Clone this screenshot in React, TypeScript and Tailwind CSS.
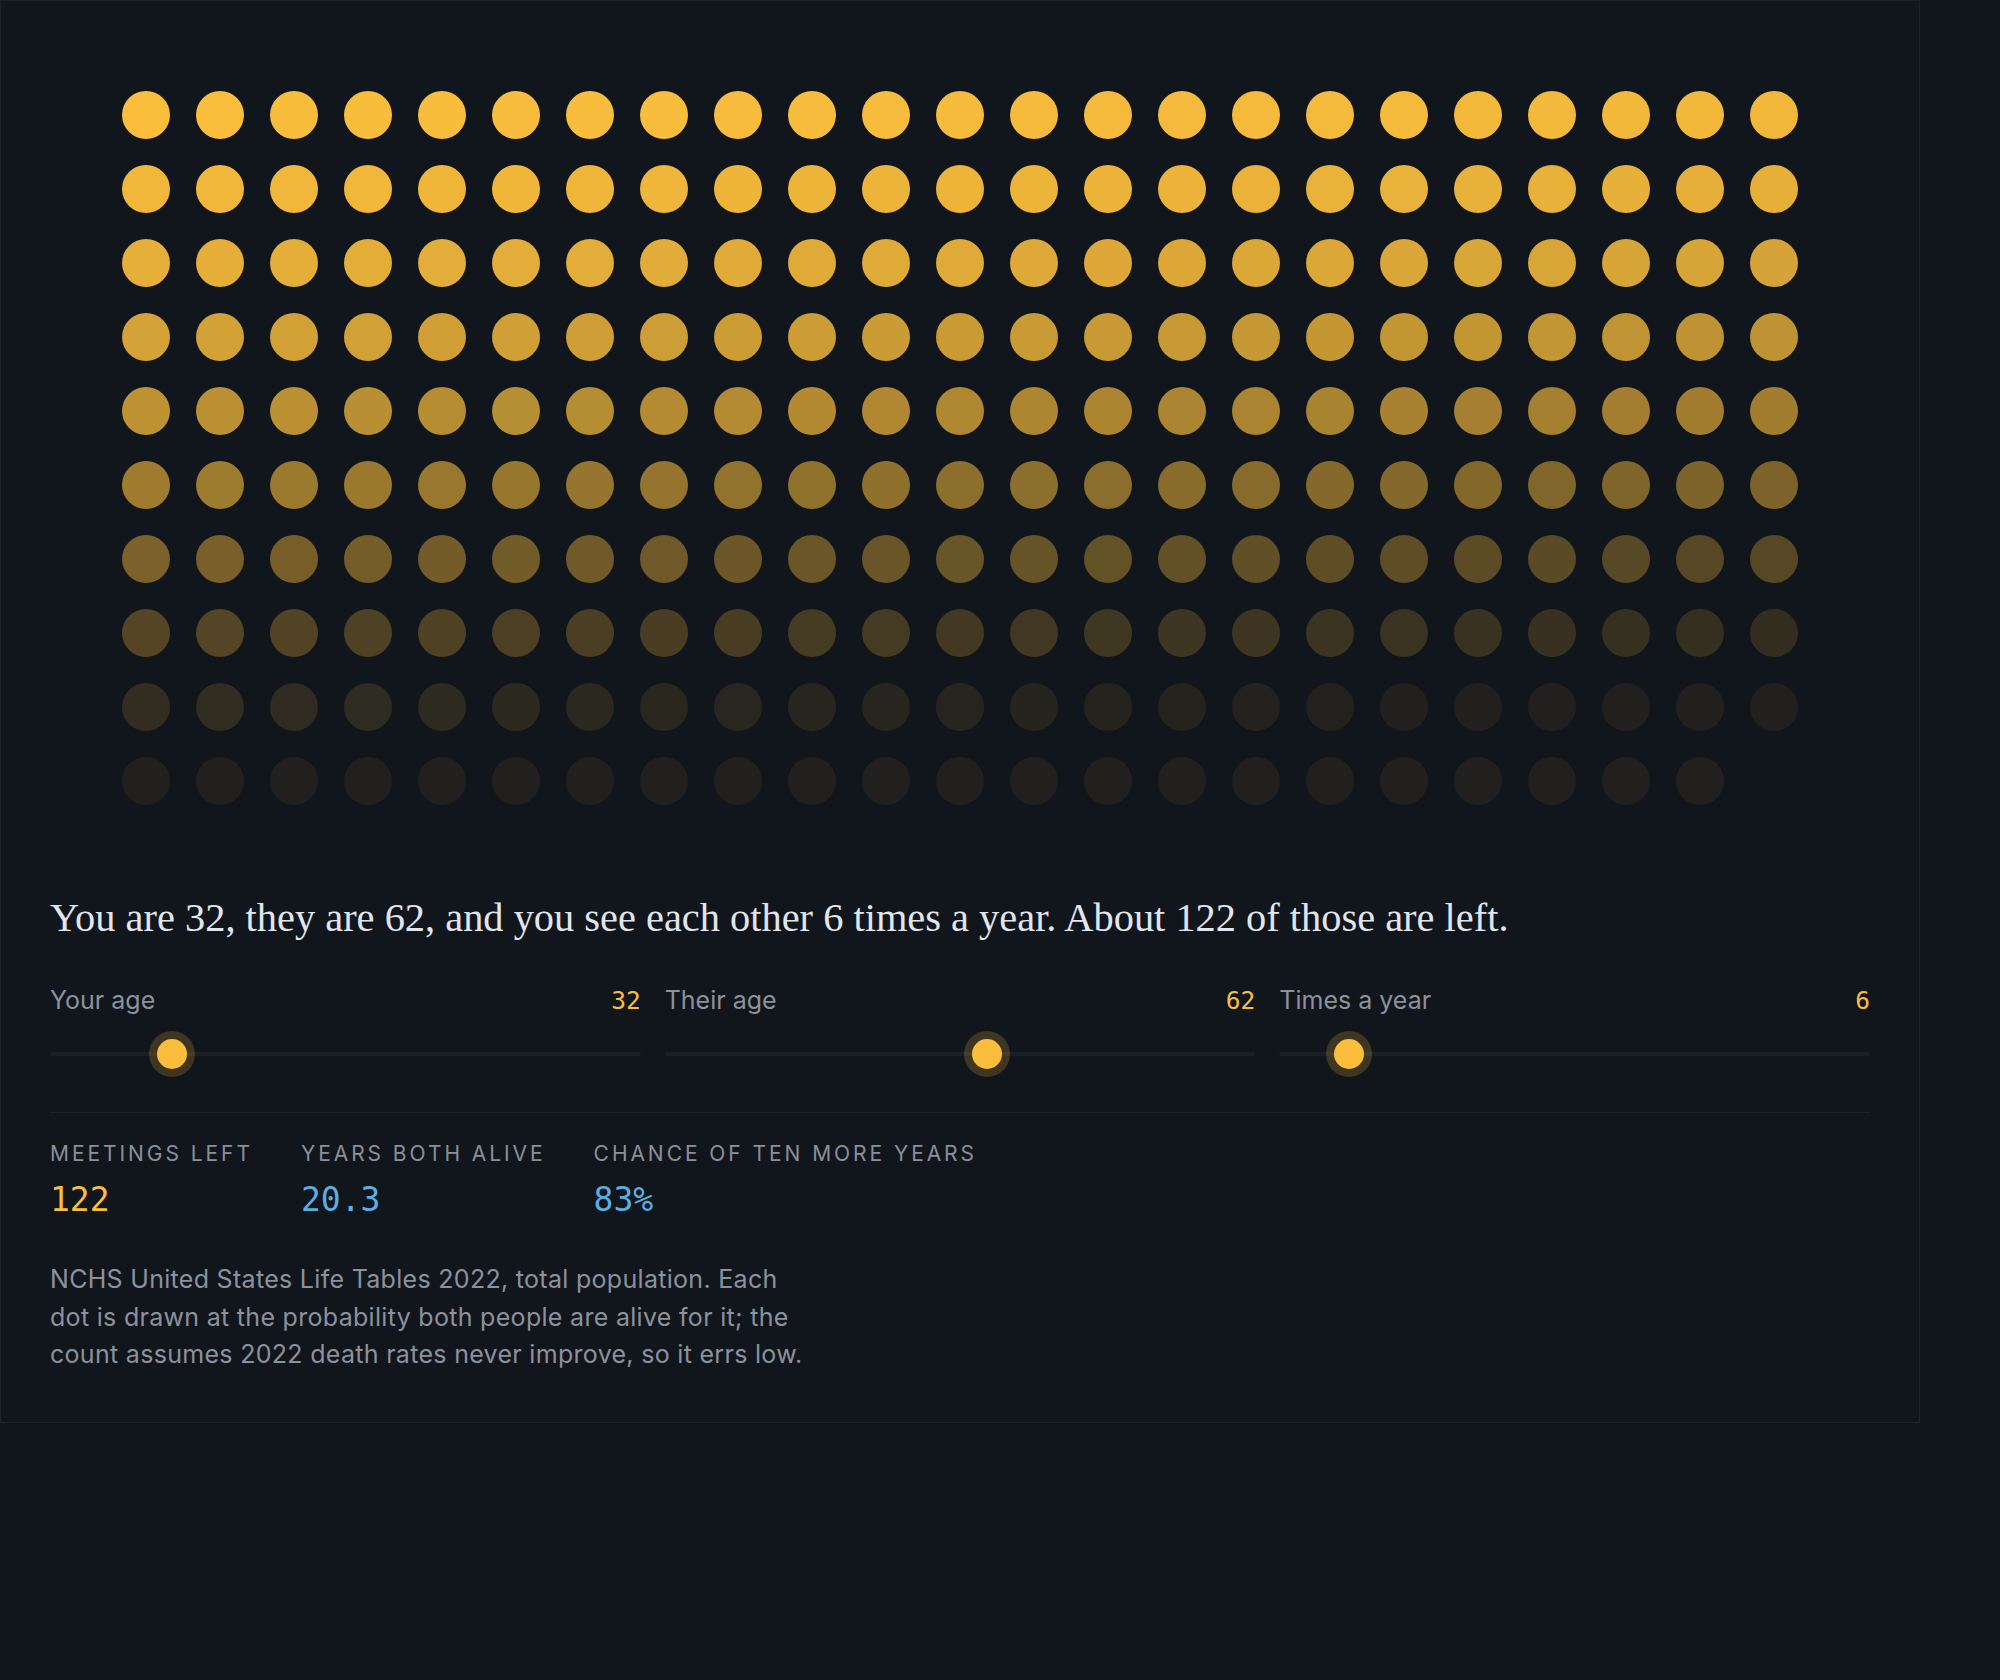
import React from 'react';

// joint chance that both people are still alive t years from now
function bothAlive(t: number) {
  return Math.exp(-0.0684 * (Math.exp(0.11 * t) - 1));
}

const TOTAL_DOTS = 229;
const dots = Array.from({ length: TOTAL_DOTS }, (_, i) => Math.max(bothAlive(i / 6), 0.07));

const sliders = [
  { label: 'Your age', value: 32, pos: 0.1905 },
  { label: 'Their age', value: 62, pos: 0.5476 },
  { label: 'Times a year', value: 6, pos: 0.098 },
];

const stats = [
  { label: 'Meetings left', value: '122', color: 'text-[#fabe3c]' },
  { label: 'Years both alive', value: '20.3', color: 'text-[#5aafe0]' },
  { label: 'Chance of ten more years', value: '83%', color: 'text-[#5aafe0]' },
];

function Slider({ label, value, pos }: { label: string; value: number; pos: number }) {
  return (
    <div>
      <div className="flex items-baseline justify-between leading-[36px]">
        <span className="text-[25px] text-[#8c929c]">{label}</span>
        <span className="font-['DejaVu_Sans_Mono',monospace] text-[24.5px] text-[#fabe3c]">{value}</span>
      </div>
      <div className="relative mt-3 h-[46px]">
        <div className="absolute inset-x-0 top-1/2 h-1 -translate-y-1/2 rounded-full bg-[#1b1f27]" />
        <div
          className="absolute top-1/2 h-[30px] w-[30px] -translate-x-1/2 -translate-y-1/2 rounded-full bg-[#fabe3c] shadow-[0_0_0_8px_rgba(250,190,60,0.2)]"
          style={{ left: `calc(15px + ${pos} * (100% - 30px))` }}
        />
      </div>
    </div>
  );
}

export default function App() {
  return (
    <div className="min-h-screen bg-[#11151c] font-['Inter',sans-serif]">
      <div className="w-[1920px] border border-[#1d2129] px-[49px] pt-[90px] pb-[48px]">
        <div className="grid grid-cols-[repeat(23,48px)] justify-center gap-[26px]">
          {dots.map((o, i) => (
            <div key={i} className="h-12 w-12 rounded-full bg-[#fabe3c]" style={{ opacity: o }} />
          ))}
        </div>

        <h1 className="mt-[88px] font-['Liberation_Serif',serif] text-[40.4px] leading-[50px] text-[#e1e6ee]">
          You are 32, they are 62, and you see each other 6 times a year. About 122 of those are left.
        </h1>

        <div className="mt-[39px] grid grid-cols-3 gap-6">
          {sliders.map((s) => (
            <Slider key={s.label} {...s} />
          ))}
        </div>

        <div className="mt-[35px] border-t border-[#1b1f27] pt-[25px]">
          <div className="flex gap-12">
            {stats.map((s) => (
              <div key={s.label}>
                <div className="text-[21px] leading-[32px] tracking-[0.14em] text-[#8a9099] uppercase">{s.label}</div>
                <div className={`mt-[10px] font-['DejaVu_Sans_Mono',monospace] text-[33px] leading-[40px] ${s.color}`}>
                  {s.value}
                </div>
              </div>
            ))}
          </div>

          <p className="mt-[41px] max-w-[756px] text-[25px] leading-[37.5px] tracking-[0.012em] text-[#8c929c]">
            NCHS United States Life Tables 2022, total population. Each dot is drawn at the probability both people
            are alive for it; the count assumes 2022 death rates never improve, so it errs low.
          </p>
        </div>
      </div>
    </div>
  );
}
